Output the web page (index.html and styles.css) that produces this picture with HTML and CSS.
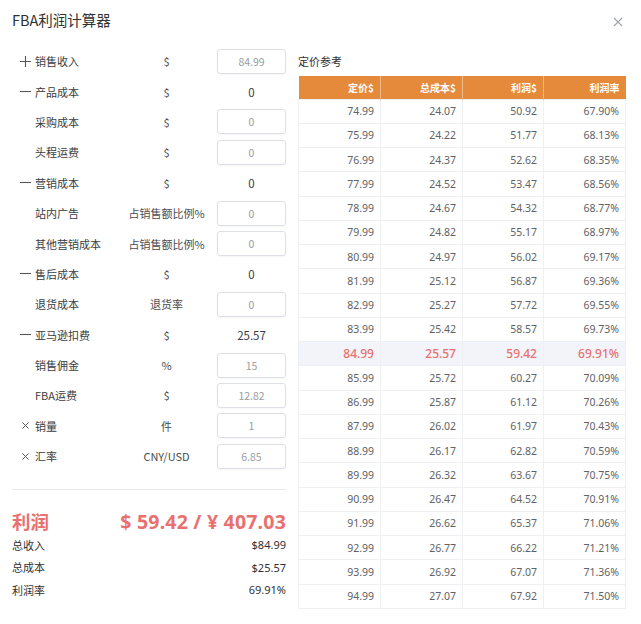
FILE: index.html
```html
<!DOCTYPE html>
<html lang="zh">
<head>
<meta charset="utf-8">
<title>FBA利润计算器</title>
<link rel="stylesheet" href="styles.css">
</head>
<body>
<div class="dialog">
  <div class="header">
    <div class="title">FBA利润计算器</div>
    <div class="close"><svg width="10" height="10" viewBox="0 0 10 10"><path d="M1 1L9 9M9 1L1 9" stroke="#a0a3a8" stroke-width="1.1" fill="none"/></svg></div>
  </div>
  <div class="body">
    <div class="left">
      <div class="form">
        <div class="row"><span class="sign"><svg width="11" height="11" viewBox="0 0 11 11"><path d="M0 5.5H11M5.5 0V11" stroke="#55575b" stroke-width="1.1" fill="none"/></svg></span><span class="label">销售收入</span><span class="unit">$</span><span class="input">84.99</span></div>
        <div class="row"><span class="sign"><svg width="11" height="11" viewBox="0 0 11 11"><path d="M0 5.5H11" stroke="#55575b" stroke-width="1.1" fill="none"/></svg></span><span class="label">产品成本</span><span class="unit">$</span><span class="value">0</span></div>
        <div class="row"><span class="sign"></span><span class="label">采购成本</span><span class="unit">$</span><span class="input">0</span></div>
        <div class="row"><span class="sign"></span><span class="label">头程运费</span><span class="unit">$</span><span class="input">0</span></div>
        <div class="row"><span class="sign"><svg width="11" height="11" viewBox="0 0 11 11"><path d="M0 5.5H11" stroke="#55575b" stroke-width="1.1" fill="none"/></svg></span><span class="label">营销成本</span><span class="unit">$</span><span class="value">0</span></div>
        <div class="row"><span class="sign"></span><span class="label">站内广告</span><span class="unit">占销售额比例%</span><span class="input">0</span></div>
        <div class="row"><span class="sign"></span><span class="label">其他营销成本</span><span class="unit">占销售额比例%</span><span class="input">0</span></div>
        <div class="row"><span class="sign"><svg width="11" height="11" viewBox="0 0 11 11"><path d="M0 5.5H11" stroke="#55575b" stroke-width="1.1" fill="none"/></svg></span><span class="label">售后成本</span><span class="unit">$</span><span class="value">0</span></div>
        <div class="row"><span class="sign"></span><span class="label">退货成本</span><span class="unit">退货率</span><span class="input">0</span></div>
        <div class="row"><span class="sign"><svg width="11" height="11" viewBox="0 0 11 11"><path d="M0 5.5H11" stroke="#55575b" stroke-width="1.1" fill="none"/></svg></span><span class="label">亚马逊扣费</span><span class="unit">$</span><span class="value">25.57</span></div>
        <div class="row"><span class="sign"></span><span class="label">销售佣金</span><span class="unit">%</span><span class="input">15</span></div>
        <div class="row"><span class="sign"></span><span class="label">FBA运费</span><span class="unit">$</span><span class="input">12.82</span></div>
        <div class="row"><span class="sign times"><svg width="7" height="7" viewBox="0 0 7 7"><path d="M0.5 0.5L6.5 6.5M6.5 0.5L0.5 6.5" stroke="#55575b" stroke-width="1" fill="none"/></svg></span><span class="label">销量</span><span class="unit">件</span><span class="input">1</span></div>
        <div class="row"><span class="sign times"><svg width="7" height="7" viewBox="0 0 7 7"><path d="M0.5 0.5L6.5 6.5M6.5 0.5L0.5 6.5" stroke="#55575b" stroke-width="1" fill="none"/></svg></span><span class="label">汇率</span><span class="unit">CNY/USD</span><span class="input">6.85</span></div>
      </div>
      <div class="divider"></div>
      <div class="profit"><span class="profit-label">利润</span><span class="profit-value">$ 59.42 / ¥ 407.03</span></div>
      <div class="summary"><span>总收入</span><span>$84.99</span></div>
      <div class="summary"><span>总成本</span><span>$25.57</span></div>
      <div class="summary"><span>利润率</span><span>69.91%</span></div>
    </div>
    <div class="right">
      <div class="caption">定价参考</div>
      <table class="ptable">
        <colgroup><col class="c1"><col class="c2"><col class="c3"><col class="c4"></colgroup>
        <thead><tr><th>定价$</th><th>总成本$</th><th>利润$</th><th>利润率</th></tr></thead>
        <tbody>
          <tr><td>74.99</td><td>24.07</td><td>50.92</td><td>67.90%</td></tr>
          <tr><td>75.99</td><td>24.22</td><td>51.77</td><td>68.13%</td></tr>
          <tr><td>76.99</td><td>24.37</td><td>52.62</td><td>68.35%</td></tr>
          <tr><td>77.99</td><td>24.52</td><td>53.47</td><td>68.56%</td></tr>
          <tr><td>78.99</td><td>24.67</td><td>54.32</td><td>68.77%</td></tr>
          <tr><td>79.99</td><td>24.82</td><td>55.17</td><td>68.97%</td></tr>
          <tr><td>80.99</td><td>24.97</td><td>56.02</td><td>69.17%</td></tr>
          <tr><td>81.99</td><td>25.12</td><td>56.87</td><td>69.36%</td></tr>
          <tr><td>82.99</td><td>25.27</td><td>57.72</td><td>69.55%</td></tr>
          <tr><td>83.99</td><td>25.42</td><td>58.57</td><td>69.73%</td></tr>
          <tr class="current"><td>84.99</td><td>25.57</td><td>59.42</td><td>69.91%</td></tr>
          <tr><td>85.99</td><td>25.72</td><td>60.27</td><td>70.09%</td></tr>
          <tr><td>86.99</td><td>25.87</td><td>61.12</td><td>70.26%</td></tr>
          <tr><td>87.99</td><td>26.02</td><td>61.97</td><td>70.43%</td></tr>
          <tr><td>88.99</td><td>26.17</td><td>62.82</td><td>70.59%</td></tr>
          <tr><td>89.99</td><td>26.32</td><td>63.67</td><td>70.75%</td></tr>
          <tr><td>90.99</td><td>26.47</td><td>64.52</td><td>70.91%</td></tr>
          <tr><td>91.99</td><td>26.62</td><td>65.37</td><td>71.06%</td></tr>
          <tr><td>92.99</td><td>26.77</td><td>66.22</td><td>71.21%</td></tr>
          <tr><td>93.99</td><td>26.92</td><td>67.07</td><td>71.36%</td></tr>
          <tr><td>94.99</td><td>27.07</td><td>67.92</td><td>71.50%</td></tr>
        </tbody>
      </table>
    </div>
  </div>
</div>
</body>
</html>
```
FILE: styles.css
```css
* { box-sizing: border-box; }
html, body { margin: 0; padding: 0; background: #ffffff; }
body {
  font-family: "Noto Sans", "Noto Sans CJK SC", sans-serif;
  color: #303133;
  width: 641px;
  height: 624px;
  overflow: hidden;
}
.dialog { padding: 0 16px 0 12px; }
.header {
  height: 46px;
  display: flex;
  justify-content: space-between;
  align-items: flex-start;
  padding-top: 10px;
}
.title {
  font-size: 14.5px;
  line-height: 20px;
  color: #303133;
  font-family: "Noto Sans CJK SC", sans-serif;
}
.close {
  width: 10px;
  height: 10px;
  margin-top: 7px;
  margin-right: 2px;
  line-height: 0;
}
.body {
  display: flex;
  gap: 12px;
}
.left { width: 274px; }
.right { width: 327px; }
.form { display: flex; flex-direction: column; }
.row {
  display: grid;
  grid-template-columns: 23px 81px 101px 69px;
  align-items: center;
  height: 30.4px;
  font-size: 11px;
  font-family: "Noto Sans CJK SC", sans-serif;
  color: #3a3c40;
}
.sign { padding-left: 8px; display: flex; align-items: center; }
.sign.times { padding-left: 10px; }
.label { white-space: nowrap; }
.unit { text-align: center; white-space: nowrap; color: #4a4c50; }
.input {
  height: 25px;
  border: 1px solid #dcdfe6;
  border-radius: 3px;
  display: flex;
  align-items: center;
  justify-content: center;
  color: #9a9ca0;
  font-size: 10.5px;
  box-shadow: 0 1px 2px rgba(0,0,0,0.04);
}
.value { text-align: center; font-size: 11.5px; color: #3a3c40; }
.divider {
  height: 1px;
  background: #e6e8ec;
  margin-top: 18px;
  margin-bottom: 19px;
}
.profit {
  display: flex;
  justify-content: space-between;
  align-items: center;
  height: 24px;
  color: #e8706e;
  font-weight: bold;
  font-family: "Noto Sans", "Noto Sans CJK SC", sans-serif;
}
.profit-label { font-size: 18.5px; font-family: "Noto Sans CJK SC", sans-serif; }
.profit-value { font-size: 19.5px; letter-spacing: 0.2px; }
.summary {
  display: flex;
  justify-content: space-between;
  align-items: center;
  height: 22.5px;
  font-size: 11px;
  color: #303133;
}
.summary span:first-child { font-family: "Noto Sans CJK SC", sans-serif; }
.caption {
  height: 30px;
  line-height: 30px;
  font-size: 11px;
  font-family: "Noto Sans CJK SC", sans-serif;
  color: #303133;
}
.ptable {
  width: 327px;
  border-collapse: collapse;
  table-layout: fixed;
  font-size: 10.5px;
}
.c1 { width: 82px; }
.c2 { width: 82px; }
.c3 { width: 81px; }
.c4 { width: 82px; }
.ptable th {
  background: #e5893a;
  color: #ffffff;
  font-weight: bold;
  height: 23px;
  text-align: right;
  padding: 0 6px 0 0;
  font-size: 10px;
  font-family: "Noto Sans CJK SC", sans-serif;
  border-right: 1px solid #f1b888;
}
.ptable th:last-child { border-right: none; }
.ptable td {
  height: 24.25px;
  text-align: right;
  padding: 0 6px 0 0;
  color: #606266;
  border: 1px solid #eef0f4;
}
.ptable tr.current td {
  background: #f3f4f9;
  color: #e8706e;
  font-size: 12px;
  font-weight: 500;
}
```
